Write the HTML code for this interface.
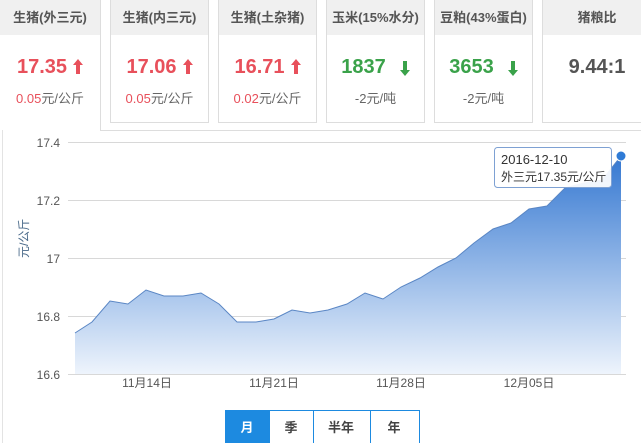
<!DOCTYPE html>
<html><head><meta charset="utf-8"><style>
*{margin:0;padding:0;box-sizing:border-box}
body{width:641px;height:443px;background:#fff;font-family:"Liberation Sans","Noto Sans CJK SC",sans-serif;position:relative;overflow:hidden}
.card{position:absolute;top:0;height:123px;border:1px solid #ddd;border-top:none;background:#fff;text-align:center}
.card .h{height:35px;background:#f0f0f0;font-size:13px;color:#555;line-height:35px;font-weight:bold}
.card .v{font-size:20px;font-weight:bold;margin-top:20px;line-height:24px}
.card .s{font-size:13px;margin-top:9px;color:#666}
.red{color:#e8505b}.grn{color:#3aa24a}
.ar{display:inline-block;vertical-align:-1px;margin-left:6px}
</style></head><body>
<div style="position:absolute;left:100px;top:0;width:1px;height:131px;background:#ddd"></div>
<div style="position:absolute;left:100px;top:130px;width:541px;height:1px;background:#ddd"></div>
<div style="position:absolute;left:2px;top:36px;width:1px;height:407px;background:#e3e3e3"></div>
<div class="card" style="left:0;width:100px;border:none;height:130px"><div class="h">生猪(外三元)</div><div class="v red">17.35<svg class="ar" width="10" height="15"><path d="M5,0 L10,6 L7,6 L7,15 L3,15 L3,6 L0,6Z" fill="#e8505b"/></svg></div><div class="s"><span class="red">0.05</span>元/公斤</div></div>
<div class="card" style="left:110px;width:99px"><div class="h">生猪(内三元)</div><div class="v red">17.06<svg class="ar" width="10" height="15"><path d="M5,0 L10,6 L7,6 L7,15 L3,15 L3,6 L0,6Z" fill="#e8505b"/></svg></div><div class="s"><span class="red">0.05</span>元/公斤</div></div>
<div class="card" style="left:218px;width:99px"><div class="h">生猪(土杂猪)</div><div class="v red">16.71<svg class="ar" width="10" height="15"><path d="M5,0 L10,6 L7,6 L7,15 L3,15 L3,6 L0,6Z" fill="#e8505b"/></svg></div><div class="s"><span class="red">0.02</span>元/公斤</div></div>
<div class="card" style="left:326px;width:99px"><div class="h">玉米(15%水分)</div><div class="v grn">1837<svg class="ar" style="margin-left:14px;vertical-align:-3px" width="10" height="15"><path d="M5,15 L10,9 L7,9 L7,0 L3,0 L3,9 L0,9Z" fill="#3aa24a"/></svg></div><div class="s">-2元/吨</div></div>
<div class="card" style="left:434px;width:99px"><div class="h">豆粕(43%蛋白)</div><div class="v grn">3653<svg class="ar" style="margin-left:14px;vertical-align:-3px" width="10" height="15"><path d="M5,15 L10,9 L7,9 L7,0 L3,0 L3,9 L0,9Z" fill="#3aa24a"/></svg></div><div class="s">-2元/吨</div></div>
<div class="card" style="left:542px;width:110px"><div class="h">猪粮比</div><div class="v" style="color:#555">9.44:1</div></div>
<svg style="position:absolute;left:0;top:0" width="641" height="443" font-family="Liberation Sans,Noto Sans CJK SC,sans-serif">
<defs><linearGradient id="g" gradientUnits="userSpaceOnUse" x1="0" y1="150" x2="0" y2="374"><stop offset="0" stop-color="#2f74d0"/><stop offset="1" stop-color="#eef4fc"/></linearGradient></defs>
<g stroke="#d8d8d8" stroke-width="1"><line x1="68" y1="142.5" x2="626" y2="142.5"/><line x1="68" y1="200.5" x2="626" y2="200.5"/><line x1="68" y1="258.5" x2="626" y2="258.5"/><line x1="68" y1="316.5" x2="626" y2="316.5"/><line x1="68" y1="374.5" x2="626" y2="374.5"/></g>
<g font-size="12" fill="#555" text-anchor="end"><text x="60" y="147">17.4</text><text x="60" y="205">17.2</text><text x="60" y="263">17</text><text x="60" y="321">16.8</text><text x="60" y="379">16.6</text></g>
<text transform="translate(28,258) rotate(-90)" font-size="12" fill="#4a6a8a">元/公斤</text>
<path d="M75,333 L92,322 L110,301 L128,304 L146,290 L164,296 L183,296 L201,293 L219,304 L237,322 L256,322 L274,319 L292,310 L310,313 L328,310 L347,304 L365,293 L383,299 L401,287 L420,278 L438,267 L456,258 L474,243 L493,229 L511,223 L529,209 L547,206 L565,188 L584,183 L602,180 L621,156 L621,374 L75,374Z" fill="url(#g)"/>
<path d="M75,333 L92,322 L110,301 L128,304 L146,290 L164,296 L183,296 L201,293 L219,304 L237,322 L256,322 L274,319 L292,310 L310,313 L328,310 L347,304 L365,293 L383,299 L401,287 L420,278 L438,267 L456,258 L474,243 L493,229 L511,223 L529,209 L547,206 L565,188 L584,183 L602,180 L621,156" fill="none" stroke="#5a86c4" stroke-width="1"/>
<circle cx="621" cy="156" r="5" fill="#2f7bd6" stroke="#fff" stroke-width="1"/>
<g font-size="12" fill="#555" text-anchor="middle"><text x="147" y="387">11月14日</text><text x="274" y="387">11月21日</text><text x="401" y="387">11月28日</text><text x="529" y="387">12月05日</text></g>
<rect x="494.5" y="147.5" width="117" height="40" rx="3" fill="#fff" fill-opacity="0.92" stroke="#7ea1d3"/>
<text x="501" y="164" font-size="13" fill="#333">2016-12-10</text>
<text x="501" y="181" font-size="12" fill="#333">外三元17.35元/公斤</text>
<rect x="225" y="410.5" width="45" height="33" fill="#1d8ae0"/>
<rect x="225.5" y="410.5" width="194" height="33" fill="none" stroke="#1d8ae0"/>
<line x1="313.5" y1="410" x2="313.5" y2="443" stroke="#1d8ae0"/><line x1="370.5" y1="410" x2="370.5" y2="443" stroke="#1d8ae0"/>
<g font-size="13" font-weight="bold" text-anchor="middle"><text x="247" y="432" fill="#fff">月</text><text x="291" y="432" fill="#444">季</text><text x="341" y="432" fill="#444">半年</text><text x="394" y="432" fill="#444">年</text></g>
</svg>
</body></html>
